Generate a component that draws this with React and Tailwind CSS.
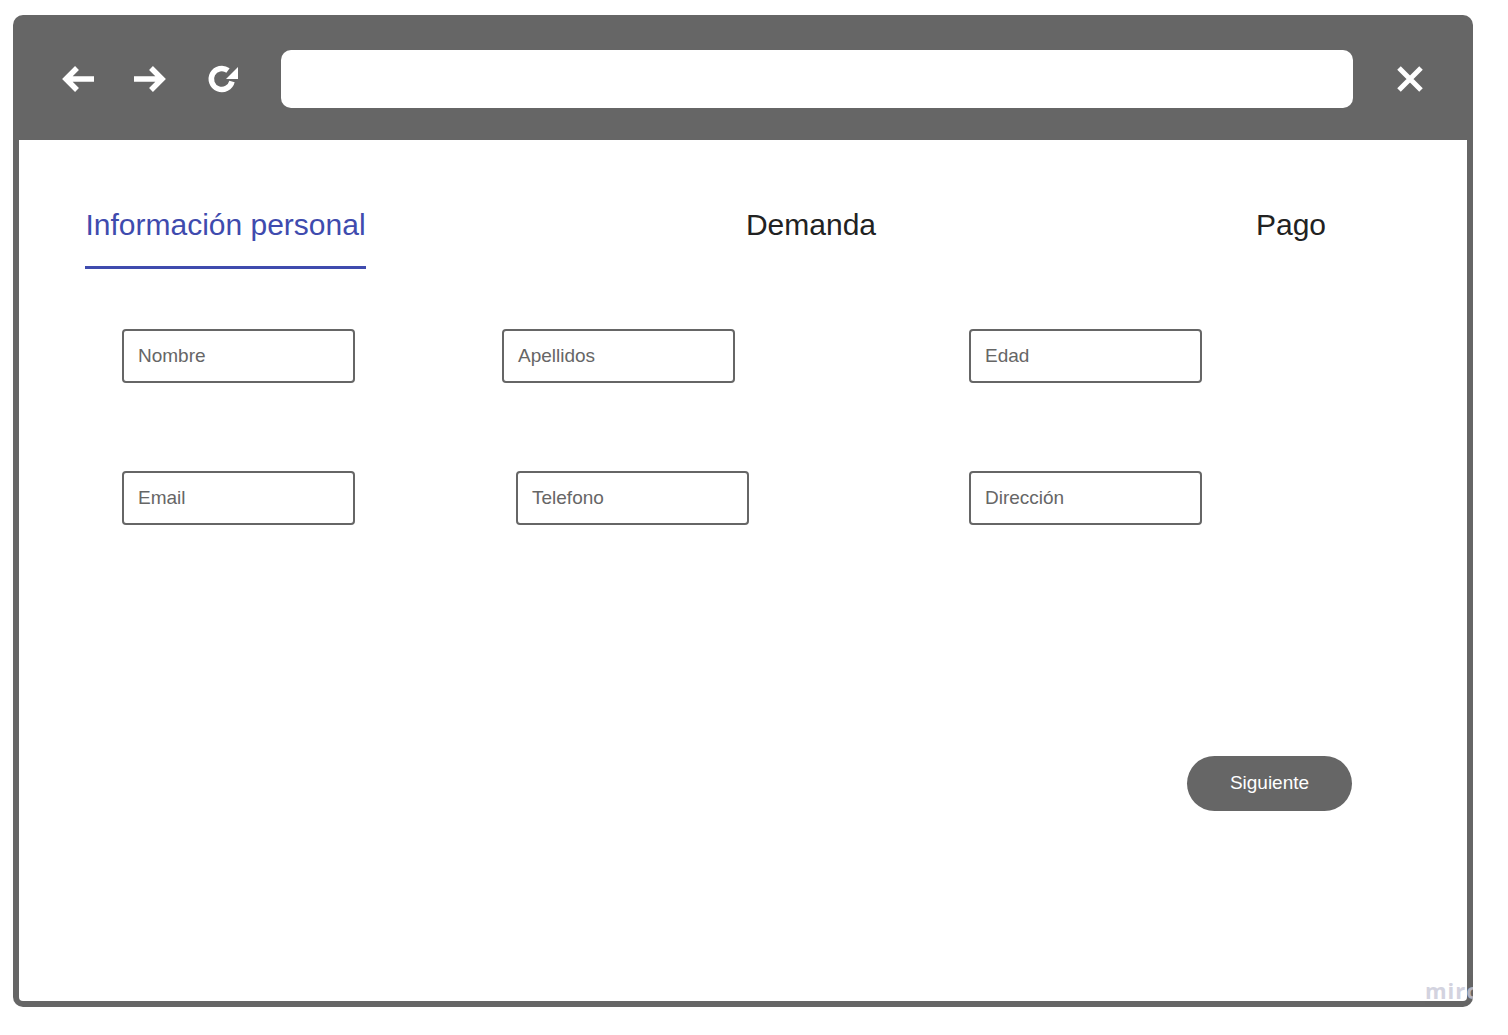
import React from "react";

const font = { fontFamily: '"Liberation Sans", Arial, sans-serif' };

function Field({ label, className = "" }) {
  return (
    <div
      className={
        "w-[233px] h-[54px] border-2 border-[#666666] rounded-[4px] flex items-center pl-[14px] text-[19px] text-[#666666] " +
        className
      }
    >
      {label}
    </div>
  );
}

export default function App() {
  return (
    <div className="min-h-screen bg-white pt-[15px] pl-[13px]" style={font}>
      <div className="relative w-[1460px] h-[992px] bg-[#666666] rounded-[10px] overflow-hidden flex flex-col px-[6px] pb-[6px]">
        {/* header */}
        <div className="h-[125px] shrink-0 flex items-center pt-[3px]">
          <svg className="ml-[42px]" width="34" height="34" viewBox="0 0 34 34" fill="none">
            <path d="M33 17H6M16 6L5 17L16 28" stroke="white" strokeWidth="5.5" strokeLinejoin="miter" />
          </svg>
          <svg className="ml-[38px]" width="34" height="34" viewBox="0 0 34 34" fill="none">
            <path d="M1 17H28M18 6L29 17L18 28" stroke="white" strokeWidth="5.5" strokeLinejoin="miter" />
          </svg>
          <svg className="ml-[38px]" width="34" height="34" viewBox="0 0 34 34" fill="none">
            <path d="M27 19.5A10.5 10.5 0 1 1 23 8.5" stroke="white" strokeWidth="5.5" />
            <path d="M33 5V17H21Z" fill="white" />
          </svg>
          <div className="ml-[42px] w-[1072px] h-[58px] bg-white rounded-[10px]" />
          <svg className="ml-[43px]" width="28" height="28" viewBox="0 0 28 28" fill="none">
            <path d="M3 3L25 25M25 3L3 25" stroke="white" strokeWidth="5" />
          </svg>
        </div>

        {/* content */}
        <div className="flex-1 bg-white rounded-b-[4px] flex flex-col">
          <div className="flex pt-[68px]">
            <div className="ml-[66px] w-[281px] flex flex-col items-center">
              <div className="text-[30px] leading-[34px] text-[#3f4bae] whitespace-nowrap">Información personal</div>
              <div className="mt-[24px] w-full h-[3px] bg-[#3f4bae]" />
            </div>
            <div className="ml-[345px] w-[200px] text-center text-[30px] leading-[34px] text-[#222222]">Demanda</div>
            <div className="ml-[280px] w-[200px] text-center text-[30px] leading-[34px] text-[#222222]">Pago</div>
          </div>

          <div className="flex mt-[60px]">
            <Field label="Nombre" className="ml-[103px]" />
            <Field label="Apellidos" className="ml-[147px]" />
            <Field label="Edad" className="ml-[234px]" />
          </div>
          <div className="flex mt-[88px]">
            <Field label="Email" className="ml-[103px]" />
            <Field label="Telefono" className="ml-[161px]" />
            <Field label="Dirección" className="ml-[220px]" />
          </div>

          <div className="flex justify-end mt-[231px] mr-[115px]">
            <button className="w-[165px] h-[55px] rounded-full bg-[#666666] text-white text-[19px]">Siguiente</button>
          </div>
        </div>

        <span className="absolute left-[1412px] top-[964px] text-[22px] leading-[22px] font-bold text-[#c8c8d8] opacity-80 tracking-[1px]" style={{ fontFamily: '"Open Sans", sans-serif' }}>
          miro
        </span>
      </div>
    </div>
  );
}
